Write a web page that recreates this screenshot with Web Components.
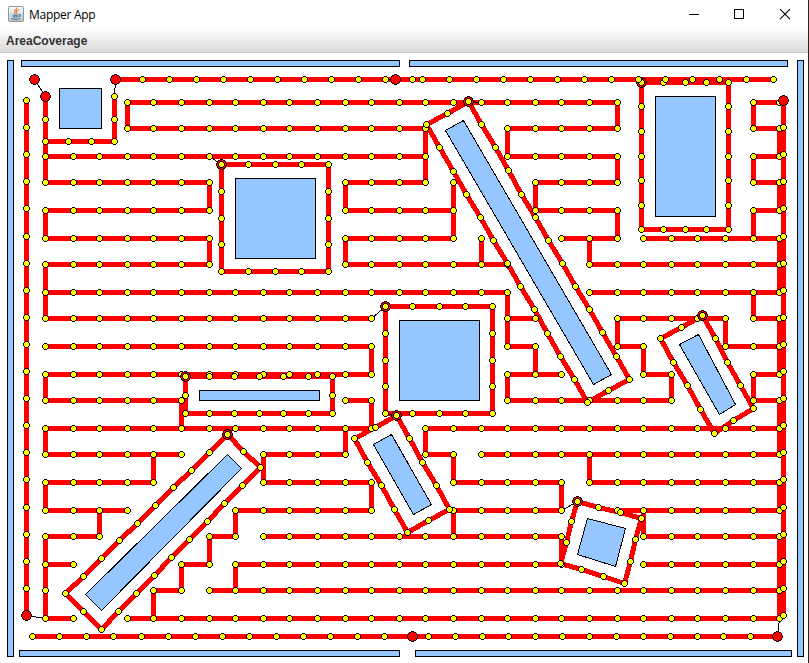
<!DOCTYPE html>
<html lang="en">
<head>
<meta charset="utf-8">
<title>Mapper App</title>
<style>html,body{margin:0;height:100%;overflow:hidden;background:#fff}</style>
</head>
<body>
<app-window>
  <title-bar slot="title">Mapper App</title-bar>
  <menu-bar slot="menu"><menu-entry>AreaCoverage</menu-entry></menu-bar>
  <coverage-map></coverage-map>
</app-window>
<script>
function define(name, html, setup) {
  const template = document.createElement('template');
  template.innerHTML = html;
  customElements.define(name, class extends HTMLElement {
    constructor() {
      super();
      const root = this.attachShadow({mode: 'open'});
      root.append(template.content.cloneNode(true));
      if (setup) setup(root);
    }
  });
}

define('title-bar', `
<style>
:host{display:flex;align-items:center;height:28px;background:#fff;color:#000;font:12px "Open Sans","Noto Sans",sans-serif}
.icon{margin-left:8px;flex:none}
.label{margin-left:5px;flex:1;white-space:nowrap;letter-spacing:-.28px;line-height:28px;padding-top:1px;box-sizing:border-box;height:28px}
.controls{flex:none;width:136px;height:28px}
</style>
<svg class="icon" width="16" height="16" viewBox="0 0 16 16">
  <defs><linearGradient id="g" x1="0" y1="0" x2="0" y2="1"><stop offset="0" stop-color="#fafafa"/><stop offset="1" stop-color="#b9c0c5"/></linearGradient></defs>
  <rect x=".5" y=".5" width="15" height="15" rx="1" fill="url(#g)" stroke="#8d979e"/>
  <path d="M8.8 1.6C9.2 4 5.6 4.2 6.6 6.3 7 7 7.8 7.4 7.8 8.2M10.6 3.8C8.4 4.8 7.8 5.6 8.6 6.5 9 7 8.8 7.6 8.5 8" fill="none" stroke="#e2762d" stroke-width="1.1"/>
  <path d="M4.5 8.7C6.5 9.5 9 9.4 10.7 8.7M5 10.5C6.8 11.2 8.6 11.2 10.3 10.5M3.2 12.4C5 13.7 10.5 13.6 12 12.4M11 8.7C13.2 8.2 12.8 10.3 10.9 10.8" fill="none" stroke="#4a7ba0" stroke-width="1.1"/>
</svg>
<span class="label"><slot></slot></span>
<svg class="controls" viewBox="0 0 136 28" fill="none" stroke="#000">
  <path d="M17 14.5h10" shape-rendering="crispEdges"/>
  <rect x="62.5" y="9.5" width="9" height="9" shape-rendering="crispEdges"/>
  <path d="M108 9.2l10 10M118 9.2l-10 10" stroke-width="1.1"/>
</svg>`);

define('menu-bar', `
<style>
:host{display:flex;height:25px;align-items:center;box-sizing:border-box;padding:0 6px 0;background:linear-gradient(#fff,#dadada);border-bottom:1px solid #ccc}
</style><slot></slot>`);

define('menu-entry', `
<style>:host{display:block;font:bold 12px/14px "Liberation Sans",Arial,sans-serif;color:#333;padding-top:2px}</style><slot></slot>`);

define('app-window', `
<style>
:host{display:flex;flex-direction:column;box-sizing:border-box;width:809px;height:663px;background:#fff;border-right:1px solid #2b2320;overflow:hidden}
main{flex:1;min-height:0}
</style>
<slot name="title"></slot><slot name="menu"></slot><main><slot></slot></main>`);

const COLS = [45,73,99,127,153,181,209,235,263,289,317,345,371,399,425,453,481,507,535,561,589,617,643,671,697,725,753,779];
const ROWS = [102,128,156,182,210,238,264,292,318,346,374,400,428,454,482,510,536,564,590,618];
// Column spans swept on each row.
const SWEEPS = [
  [[3,21],[26,27]], [[3,14],[17,21],[26,27]], [[0,14],[17,21],[26,27]],
  [[0,6],[11,14],[15,15],[18,21],[26,27]], [[0,6],[11,15],[18,21],[26,27]],
  [[0,6],[11,15],[16,16],[19,21],[22,27]], [[0,6],[11,17],[20,27]], [[0,17],[20,27]],
  [[0,12],[17,18],[21,25],[26,27]], [[0,12],[17,18],[21,22],[25,27]],
  [[0,12],[17,19],[22,23],[26,27]], [[0,5],[11,12],[17,23],[26,27]],
  [[0,12],[14,27]], [[0,5],[8,11],[14,15],[16,27]], [[0,4],[8,12],[15,19],[20,27]],
  [[0,3],[7,12],[15,19],[21,27]], [[0,2],[6,7],[8,19],[22,27]],
  [[0,1],[5,6],[7,19],[22,27]], [[0,0],[4,5],[6,27]], [[0,1],[3,27]]
];
// Row spans joined on each column.
const JOINS = {
  0:[[0,3],[4,5],[6,8],[10,11],[12,13],[14,15],[16,19]], 2:[[15,16]], 3:[[0,1]], 4:[[13,14],[18,19]],
  5:[[11,12],[17,18]], 6:[[3,4],[5,6],[16,17]], 7:[[15,16],[17,18]], 8:[[13,14]],
  11:[[3,4],[5,6],[12,13]], 12:[[9,10],[11,12],[14,15]], 14:[[1,3],[12,13]],
  15:[[3,5],[13,14],[15,16]], 16:[[5,6]], 17:[[1,2],[7,9],[10,11]], 18:[[3,4],[9,10]],
  19:[[14,15],[16,17]], 20:[[5,6],[13,14]], 21:[[0,1],[2,3],[4,5],[8,9]], 22:[[9,10],[15,16]],
  23:[[10,11]], 25:[[8,9]], 26:[[0,1],[2,3],[4,5],[7,8],[10,11]],
  27:[[1,2],[3,4],[5,7],[8,10],[11,13],[14,15],[16,19]]
};
const SIDE = [100,127,154,181,208,236,263,290,317,344,371,398,425,452,479,507,534,561,588,615];
function box(xs, ys) {
  const l = xs[0], r = xs[xs.length-1], t = ys[0], b = ys[ys.length-1];
  return [...xs.map(x => [x,t]), ...ys.slice(1).map(y => [r,y]), ...xs.slice(0,-1).reverse().map(x => [x,b]), ...ys.slice(1,-1).reverse().map(y => [l,y])];
}
const LOOPS = [
  box([221,248,275,301,328],[164,191,218,244,271]),
  box([385,412,439,465,492],[306,333,360,386,413]),
  box([641,663,685,706,728],[82,106,131,156,180,205,229]),
  box([185,209,234,259,283,308,332],[376,395,413]),
  [[468,101],[481,124],[495,147],[508,170],[521,194],[535,217],[548,240],[562,263],[575,286],[589,309],[602,332],[616,356],[629,379],[608,390],[587,402],[574,379],[560,356],[547,333],[534,309],[520,286],[507,263],[493,240],[480,217],[466,194],[453,171],[439,147],[426,124],[447,113]],
  [[702,315],[715,338],[727,362],[740,385],[753,408],[733,420],[714,433],[700,409],[687,385],[673,362],[660,338],[681,327]],
  [[396,415],[409,438],[422,462],[436,485],[449,509],[428,520],[407,532],[394,509],[381,485],[367,462],[354,438],[375,427]],
  [[227,434],[243,451],[260,467],[242,485],[224,503],[207,521],[189,539],[171,557],[154,575],[136,593],[118,611],[101,629],[83,611],[65,593],[83,576],[101,558],[119,540],[137,523],[155,505],[173,487],[191,470],[209,452]],
  [[577,501],[598,507],[620,512],[641,518],[635,539],[630,561],[624,583],[603,576],[581,569],[560,563],[566,542],[571,521]]
];
const RUNS = [
  [[45,96],[45,119],[45,141],[68,141],[91,141],[114,141],[114,119],[114,96]],
  [115,142,169,196,223,250,277,304,331,358,385,395,412,422,449,476,503,530,557,584,611,638,665,692,719,746,773].map(x => [x,79]),
  [32,59,86,113,141,168,195,222,249,276,303,330,357,384,412,428,455,482,508,535,562,589,616,643,670,697,723,750,777].map(x => [x,636]),
  SIDE.map(y => [26,y]), SIDE.map(y => [783,y])
];
const LINKS = [[34,79,45,96],[115,79,114,96],[385,79,395,79],[209,156,221,164],[371,318,385,306],[468,101,481,102],[26,615,45,618],[385,413,396,415],[561,510,577,501],[777,636,779,618],[181,374,185,376],[227,434,235,428],[697,318,702,315]];
const STOPS = [[34,79],[45,96],[115,79],[395,79],[783,100],[26,615],[412,636],[777,636]];
const BLOCKS = [[7,60,6,596],[21,60,378,6],[409,60,378,6],[797,60,6,596],[19,650,380,6],[415,650,376,6],[59,88,42,40],[235,178,80,80],[399,320,80,80],[655,96,60,120],[199,390,120,10]];
const TILTED = ['463,120 445,130 593,384 611,374','698,334 679,344 719,414 735,404','391,434 373,444 413,514 431,504','227,454 241,468 101,610 85,594','587,518 625,528 615,566 577,554'];

const node = ([x,y]) => `<use href="#node" x="${x}" y="${y}"/>`;
const stop = ([x,y]) => `<use href="#stop" x="${x}" y="${y}"/>`;
const trail = (pts, close) => `<path class="trail" d="M${pts.map(p => p.join(' ')).join('L')}${close ? 'Z' : ''}"/>`;

define('coverage-map', `
<style>
:host{display:block;width:808px;height:610px}
svg{display:block}
.trail{fill:none;stroke:#f00;stroke-width:5;stroke-linecap:butt}
.block{fill:#96c6ff;stroke:#000}
.link{stroke:#000}
</style>
<svg width="808" height="610" viewBox="0 53 808 610" shape-rendering="crispEdges">
<defs>
  <g id="node"><path d="M-1-3h3v1h1v1h1v3h-1v1h-1v1h-3v-1h-1v-1h-1v-3h1v-1h1z"/><path fill="#ff0" d="M-1-2h3v1h1v3h-1v1h-3v-1h-1v-3h1z"/></g>
  <g id="stop"><path d="M-1-5h3v1h2v1h1v2h1v3h-1v2h-1v1h-2v1h-3v-1h-2v-1h-1v-2h-1v-3h1v-2h1v-1h2z"/><path fill="#f00" d="M-1-4h3v1h2v2h1v3h-1v2h-2v1h-3v-1h-2v-2h-1v-3h1v-2h2z"/></g>
</defs>
<g id="map"></g></svg>`, root => {
  let s = '<g transform="translate(.5 .5)">';
  for (const [x,y,w,h] of BLOCKS) s += `<rect class="block" x="${x}" y="${y}" width="${w}" height="${h}"/>`;
  for (const p of TILTED) s += `<polygon class="block" points="${p}"/>`;
  SWEEPS.forEach((spans, r) => spans.forEach(([a,b]) => { s += trail([[COLS[a],ROWS[r]],[COLS[b],ROWS[r]]]); }));
  for (const c in JOINS) for (const [a,b] of JOINS[c]) s += trail([[COLS[c],ROWS[a]],[COLS[c],ROWS[b]]]);
  LOOPS.forEach(p => { s += trail(p, true); });
  RUNS.forEach(p => { s += trail(p); });
  LINKS.forEach(([a,b,c,d]) => { s += `<path class="link" d="M${a} ${b}L${c} ${d}"/>`; });
  s += '</g>';
  SWEEPS.forEach((spans, r) => spans.forEach(([a,b]) => { for (let c = a; c <= b; c++) s += node([COLS[c],ROWS[r]]); }));
  LOOPS.forEach(p => { s += stop(p[0]) + p.map(node).join(''); });
  RUNS.forEach(p => { s += p.map(node).join(''); });
  s += STOPS.map(stop).join('');
  root.getElementById('map').innerHTML = s;
});
</script>
</body>
</html>
